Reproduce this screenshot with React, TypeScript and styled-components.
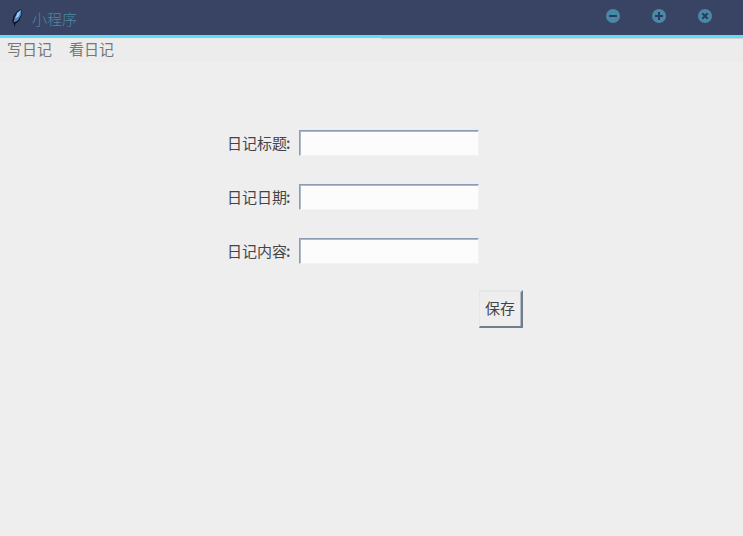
import React from "react";
import styled, { createGlobalStyle } from "styled-components";

const GlobalStyle = createGlobalStyle`
  * { box-sizing: border-box; }
  body {
    margin: 0;
    background: #eeeeee;
    font-family: "Noto Sans CJK SC", "Noto Sans", sans-serif;
    font-size: 15px;
  }
`;

const Window = styled.div`
  width: 100%;
  height: 100vh;
  display: flex;
  flex-direction: column;
  background: #eeeeee;
  overflow: hidden;
`;

const TitleBar = styled.header`
  flex: none;
  height: 38px;
  display: flex;
  align-items: flex-start;
  padding: 0 30px 0 9px;
  background: #394464;
  border-bottom: 3px solid #63dcf8;
`;

const Feather = styled.svg`
  flex: none;
  width: 16px;
  height: 20px;
  margin-top: 8px;
`;

const Title = styled.h1`
  margin: 0 auto 0 7px;
  font-size: 15px;
  font-weight: 300;
  line-height: 38px;
  color: #4a89a5;
`;

const WindowControls = styled.div`
  display: flex;
  gap: 30px;
  margin-top: 8px;
`;

const ControlButton = styled.button`
  width: 16px;
  height: 16px;
  padding: 0;
  border: 0;
  background: none;
  display: block;

  svg { display: block; }
`;

const MenuBar = styled.nav`
  flex: none;
  height: 24px;
  display: flex;
  gap: 17px;
  padding-left: 7px;
  background: linear-gradient(#d2d2d2, #d2d2d2) 381px 0 / 100% 1px no-repeat, #ececec;
`;

const MenuItem = styled.span`
  line-height: 22px;
  color: #777777;
`;

const Form = styled.form`
  display: grid;
  grid-template-columns: 72px 180px 45px;
  grid-template-rows: 26px 26px 26px 38px;
  row-gap: 28px;
  margin: 68px 0 0 227px;
`;

const Label = styled.label`
  grid-column: 1;
  line-height: 25px;
  color: #444448;
  white-space: nowrap;
`;

const Colon = styled.span`
  margin-left: -1px;
  font-weight: 500;
`;

const Field = styled.input`
  grid-column: 2;
  width: 180px;
  height: 26px;
  padding: 0 4px;
  border-style: solid;
  border-width: 1px;
  border-color: #8b9db2 #f3f3f3 #f3f3f3 #8b9db2;
  border-radius: 0;
  outline: none;
  background: #fcfcfc;
  box-shadow: inset 1px 1px 0 #abb8c7;
  font: inherit;
`;

const SaveButton = styled.button`
  grid-column: 3;
  grid-row: 4;
  width: 44px;
  height: 38px;
  margin-top: -2px;
  padding: 0 1px 2px 0;
  border-style: solid;
  border-width: 2px 2px 2px 1px;
  border-color: #e5e6e8 #6f7d8c #6f7d8c #e5e6e8;
  border-radius: 0;
  background: #eeeeee;
  box-shadow: inset -1px 0 0 #b4bcc5;
  color: #444448;
  font: inherit;
  line-height: 30px;
`;

const controls = [
  { name: "最小化", mark: "M4 8H12" },
  { name: "最大化", mark: "M4 8H12M8 4V12" },
  { name: "关闭", mark: "M5.3 5.3L10.7 10.7M10.7 5.3L5.3 10.7" },
];

const fields = ["日记标题", "日记日期", "日记内容"];

export default function App() {
  return (
    <Window>
      <GlobalStyle />
      <TitleBar>
        <Feather viewBox="0 0 16 20">
          <path d="M12.5 1L8 3.5L4.5 8L3.2 14.2L5 16L5.2 19.5L6.7 15.5L10 13L12.5 7.5Z" fill="#10131b" />
          <path d="M12.1 1.7L8.5 4.2L5.8 9L4.6 14.5L8.8 12.6L12 7Z" fill="#4c87cc" />
          <path d="M11.8 2.2L8.5 5.2L6.4 10.5L9.5 8.2Z" fill="#a9d2ed" />
        </Feather>
        <Title>小程序</Title>
        <WindowControls>
          {controls.map(({ name, mark }) => (
            <ControlButton key={name} aria-label={name}>
              <svg width="16" height="16" viewBox="0 0 16 16">
                <circle cx="8" cy="8" r="7" fill="#4a89a5" />
                <path d={mark} stroke="#2d3961" strokeWidth="2" />
              </svg>
            </ControlButton>
          ))}
        </WindowControls>
      </TitleBar>
      <MenuBar>
        <MenuItem>写日记</MenuItem>
        <MenuItem>看日记</MenuItem>
      </MenuBar>
      <Form>
        {fields.map((field, index) => (
          <React.Fragment key={field}>
            <Label htmlFor={`field-${index}`}>{field}<Colon>:</Colon></Label>
            <Field id={`field-${index}`} />
          </React.Fragment>
        ))}
        <SaveButton type="button">保存</SaveButton>
      </Form>
    </Window>
  );
}
